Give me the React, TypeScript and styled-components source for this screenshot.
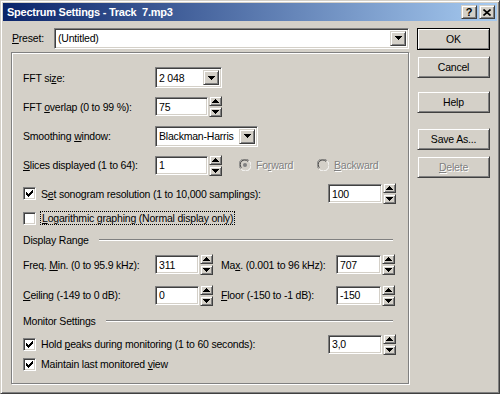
import styled, { createGlobalStyle, css } from "styled-components";

const GlobalStyle = createGlobalStyle`
  body {
    margin: 0;
    background: #d4d0c8;
  }
`;

const raised = css`
  border: 1px solid;
  border-color: #d4d0c8 #404040 #404040 #d4d0c8;
  box-shadow: inset 1px 1px #fff, inset -1px -1px #808080;
  background: #d4d0c8;
  box-sizing: border-box;
`;

const sunken = css`
  border: 1px solid;
  border-color: #808080 #fff #fff #808080;
  box-shadow: inset 1px 1px #404040, inset -1px -1px #d4d0c8;
  background: #fff;
  box-sizing: border-box;
`;

const Window = styled.div`
  width: 500px;
  height: 394px;
  box-sizing: border-box;
  background: #d4d0c8;
  border: 1px solid;
  border-color: #d4d0c8 #404040 #404040 #d4d0c8;
  box-shadow: inset 1px 1px #fff, inset -1px -1px #808080;
  padding: 2px;
  display: flex;
  flex-direction: column;
  font-family: "Liberation Sans", Arial, sans-serif;
  font-size: 10.5px;
  letter-spacing: -0.2px;
  color: #000;
`;

const TitleBar = styled.div`
  height: 18px;
  display: flex;
  align-items: center;
  padding: 0 2px;
  background: linear-gradient(to right, #0a246a, #a6caf0);
  color: #fff;
  font-size: 11px;
  font-weight: bold;
  letter-spacing: -0.25px;
`;

const Title = styled.span`
  margin-left: 2px;
  white-space: pre;
  flex: 1;
`;

const CaptionButton = styled.div`
  ${raised};
  width: 16px;
  height: 14px;
  display: flex;
  align-items: center;
  justify-content: center;
  color: #000;
  font-size: 11px;
  font-weight: bold;
  margin-left: 2px;
`;

const Body = styled.div`
  flex: 1;
  display: flex;
  gap: 8px;
  padding: 7px 7px 0 8px;
`;

const LeftColumn = styled.div`
  width: 398px;
  display: flex;
  flex-direction: column;
`;

const RightColumn = styled.div`
  width: 73px;
  display: flex;
  flex-direction: column;
`;

const PresetRow = styled.div`
  height: 20px;
  display: flex;
  align-items: center;
`;

const PresetLabel = styled.span`
  width: 42px;
  padding-left: 1px;
`;

const Combo = styled.div<{ $width?: number }>`
  ${sunken};
  height: 21px;
  ${(p) => (p.$width ? `width: ${p.$width}px;` : "flex: 1;")}
  display: flex;
  align-items: center;
  padding: 2px;
`;

const ComboText = styled.span`
  flex: 1;
  padding-left: 1px;
  white-space: nowrap;
  overflow: hidden;
`;

const DropButton = styled.div`
  ${raised};
  width: 16px;
  height: 100%;
  display: flex;
  align-items: center;
  justify-content: center;
`;

const Frame = styled.div`
  margin-top: 4px;
  height: 332px;
  box-sizing: border-box;
  border: 1px solid #808080;
  box-shadow: inset 1px 1px #fff, 1px 1px #fff;
  padding: 10px 12px 0 11px;
  display: flex;
  flex-direction: column;
`;

const Row = styled.div<{ $h: number }>`
  height: ${(p) => p.$h}px;
  display: flex;
  align-items: center;
  white-space: nowrap;
`;

const Label = styled.span<{ $w?: number; $ml?: number }>`
  width: ${(p) => p.$w ?? 132}px;
  margin-left: ${(p) => p.$ml ?? 0}px;
  flex-shrink: 0;
`;

const U = styled.span`
  text-decoration: underline;
`;

const SpinGroup = styled.div<{ $right?: boolean }>`
  display: flex;
  align-items: center;
  gap: 1px;
  ${(p) => p.$right && "margin-left: auto;"}
`;

const TextBox = styled.div<{ $w: number }>`
  ${sunken};
  width: ${(p) => p.$w}px;
  height: 19px;
  display: flex;
  align-items: center;
  padding-left: 3px;
`;

const SpinButtons = styled.div`
  display: flex;
  flex-direction: column;
  gap: 1px;
`;

const SpinButton = styled.div`
  ${raised};
  width: 13px;
  height: 10px;
  display: flex;
  align-items: center;
  justify-content: center;
`;

const CheckBox = styled.div`
  ${sunken};
  width: 13px;
  height: 13px;
  display: flex;
  align-items: center;
  justify-content: center;
  flex-shrink: 0;
  margin-right: 5px;
`;

const Focus = styled.span`
  outline: 1px dotted #000;
  outline-offset: 0;
  padding: 0 1px;
`;

const RadioItem = styled.div<{ $w?: number }>`
  display: flex;
  align-items: center;
  gap: 5px;
  width: ${(p) => (p.$w ? `${p.$w}px` : "auto")};
  color: #808080;
  text-shadow: 1px 1px #fff;
`;

const Radios = styled.div`
  display: flex;
  margin-left: 17px;
`;

const SectionLine = styled.div`
  flex: 1;
  height: 0;
  border-top: 1px solid #808080;
  border-bottom: 1px solid #fff;
  margin: 0 3px 0 10px;
`;

const Button = styled.div<{ $mt: number; $default?: boolean; $disabled?: boolean }>`
  ${raised};
  height: 22px;
  margin-top: ${(p) => p.$mt}px;
  display: flex;
  align-items: center;
  justify-content: center;
  ${(p) =>
    p.$default &&
    css`
      outline: 1px solid #000;
      outline-offset: -1px;
      border-color: #fff #404040 #404040 #fff;
    `}
  ${(p) =>
    p.$disabled &&
    css`
      color: #808080;
      text-shadow: 1px 1px #fff;
    `}
`;

const DownArrow = () => (
  <svg width="7" height="4" viewBox="0 0 7 4" shapeRendering="crispEdges">
    <path d="M0 0h7v1H0zM1 1h5v1H1zM2 2h3v1H2zM3 3h1v1H3z" fill="#000" />
  </svg>
);

const UpArrow = () => (
  <svg width="7" height="4" viewBox="0 0 7 4" shapeRendering="crispEdges">
    <path d="M3 0h1v1H3zM2 1h3v1H2zM1 2h5v1H1zM0 3h7v1H0z" fill="#000" />
  </svg>
);

const Check = () => (
  <svg width="7" height="7" viewBox="0 0 7 7" shapeRendering="crispEdges">
    <path
      d="M6 0h1v1H6zM5 1h2v1H5zM4 2h3v1H4zM0 2h1v1H0zM0 3h2v1H0zM3 3h3v1H3zM0 4h5v1H0zM1 5h3v1H1zM2 6h1v1H2z"
      fill="#000"
    />
  </svg>
);

const Radio = ({ checked }: { checked?: boolean }) => (
  <svg width="12" height="12" viewBox="0 0 12 12">
    <circle cx="6" cy="6" r="5.5" fill="#d4d0c8" />
    <path d="M1.5 9.5A5.5 5.5 0 0 1 9.9 1.6" stroke="#808080" fill="none" />
    <path d="M2.4 8.6A4.5 4.5 0 0 1 9 2.4" stroke="#404040" fill="none" />
    <path d="M10.4 2.4A5.5 5.5 0 0 1 2.4 10.4" stroke="#fff" fill="none" />
    <path d="M9.6 3.3A4.5 4.5 0 0 1 3.3 9.6" stroke="#d4d0c8" fill="none" />
    {checked && <circle cx="6" cy="6" r="2" fill="#808080" />}
  </svg>
);

const Spin = ({ value, w, right }: { value: string; w: number; right?: boolean }) => (
  <SpinGroup $right={right}>
    <TextBox $w={w}>{value}</TextBox>
    <SpinButtons>
      <SpinButton>
        <UpArrow />
      </SpinButton>
      <SpinButton>
        <DownArrow />
      </SpinButton>
    </SpinButtons>
  </SpinGroup>
);

const CheckRow = ({ checked, children }: { checked?: boolean; children: React.ReactNode }) => (
  <>
    <CheckBox>{checked && <Check />}</CheckBox>
    {children}
  </>
);

export default function App() {
  return (
    <>
      <GlobalStyle />
      <Window>
        <TitleBar>
          <Title>Spectrum Settings - Track  7.mp3</Title>
          <CaptionButton>?</CaptionButton>
          <CaptionButton>
            <svg width="8" height="7" viewBox="0 0 8 7">
              <path d="M0.5 0.5l7 6M7.5 0.5l-7 6" stroke="#000" strokeWidth="1.6" />
            </svg>
          </CaptionButton>
        </TitleBar>
        <Body>
          <LeftColumn>
            <PresetRow>
              <PresetLabel>
                <U>P</U>reset:
              </PresetLabel>
              <Combo>
                <ComboText>(Untitled)</ComboText>
                <DropButton>
                  <DownArrow />
                </DropButton>
              </Combo>
            </PresetRow>
            <Frame>
              <Row $h={29}>
                <Label>
                  FFT si<U>z</U>e:
                </Label>
                <Combo $width={67}>
                  <ComboText>2 048</ComboText>
                  <DropButton>
                    <DownArrow />
                  </DropButton>
                </Combo>
              </Row>
              <Row $h={29}>
                <Label>
                  FFT <U>o</U>verlap (0 to 99 %):
                </Label>
                <Spin value="75" w={53} />
              </Row>
              <Row $h={30}>
                <Label>
                  Smoothing <U>w</U>indow:
                </Label>
                <Combo $width={103}>
                  <ComboText>Blackman-Harris</ComboText>
                  <DropButton>
                    <DownArrow />
                  </DropButton>
                </Combo>
              </Row>
              <Row $h={28}>
                <Label>
                  <U>S</U>lices displayed (1 to 64):
                </Label>
                <Spin value="1" w={53} />
                <Radios>
                  <RadioItem $w={78}>
                    <Radio checked />
                    <span>
                      Fo<U>r</U>ward
                    </span>
                  </RadioItem>
                  <RadioItem>
                    <Radio />
                    <span>
                      <U>B</U>ackward
                    </span>
                  </RadioItem>
                </Radios>
              </Row>
              <Row $h={29}>
                <CheckRow checked>
                  <span>
                    S<U>e</U>t sonogram resolution (1 to 10,000 samplings):
                  </span>
                </CheckRow>
                <Spin value="100" w={54} right />
              </Row>
              <Row $h={20}>
                <CheckRow>
                  <Focus>
                    <U>L</U>ogarithmic graphing (Normal display only)
                  </Focus>
                </CheckRow>
              </Row>
              <Row $h={23}>
                <span>Display Range</span>
                <SectionLine />
              </Row>
              <Row $h={27}>
                <Label>
                  Freq. <U>M</U>in. (0 to 95.9 kHz):
                </Label>
                <Spin value="311" w={44} />
                <Label $w={115} $ml={8}>
                  Ma<U>x</U>. (0.001 to 96 kHz):
                </Label>
                <Spin value="707" w={45} />
              </Row>
              <Row $h={34}>
                <Label>
                  <U>C</U>eiling (-149 to 0 dB):
                </Label>
                <Spin value="0" w={44} />
                <Label $w={115} $ml={8}>
                  <U>F</U>loor (-150 to -1 dB):
                </Label>
                <Spin value="-150" w={45} />
              </Row>
              <Row $h={18}>
                <span>Monitor Settings</span>
                <SectionLine />
              </Row>
              <Row $h={28}>
                <CheckRow checked>
                  <span>
                    Hold <U>p</U>eaks during monitoring (1 to 60 seconds):
                  </span>
                </CheckRow>
                <Spin value="3,0" w={54} right />
              </Row>
              <Row $h={12}>
                <CheckRow checked>
                  <span>
                    Maintain last monitored <U>v</U>iew
                  </span>
                </CheckRow>
              </Row>
            </Frame>
          </LeftColumn>
          <RightColumn>
            <Button $mt={0} $default>
              OK
            </Button>
            <Button $mt={6}>Cancel</Button>
            <Button $mt={13}>Help</Button>
            <Button $mt={15}>Save As...</Button>
            <Button $mt={6} $disabled>
              <span>
                <U>D</U>elete
              </span>
            </Button>
          </RightColumn>
        </Body>
      </Window>
    </>
  );
}
